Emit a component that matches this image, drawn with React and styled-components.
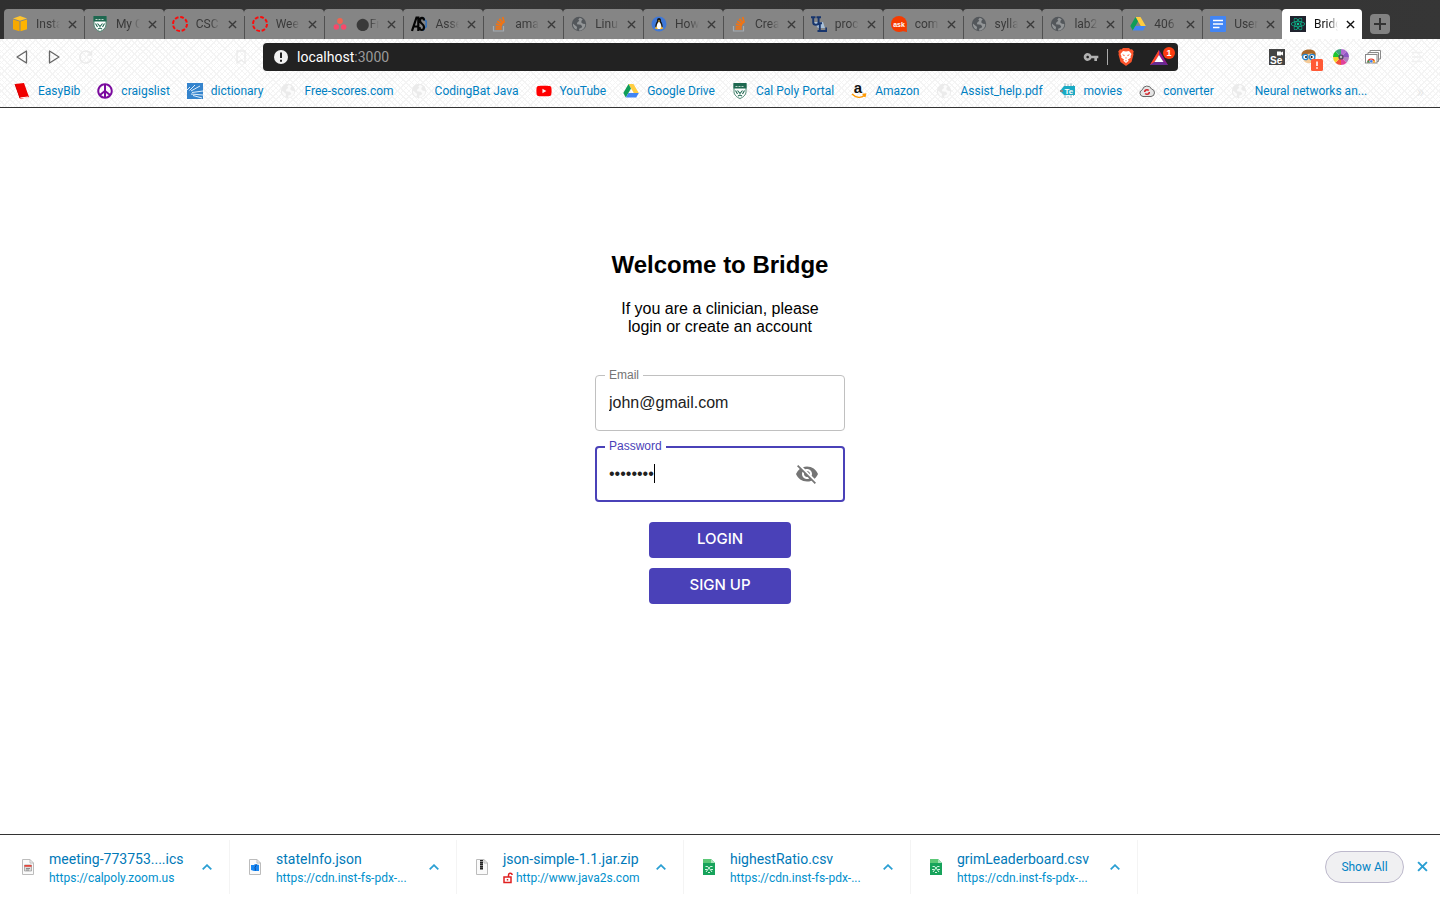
import React, { useState } from "react";
import styled, { createGlobalStyle, css } from "styled-components";
import { FaReact, FaPeace, FaYoutube } from "react-icons/fa";
import { MdVisibilityOff, MdVpnKey } from "react-icons/md";

const Global = createGlobalStyle`
  *, *::before, *::after { box-sizing: border-box; }
  body { margin: 0; background: #fff; font-family: Roboto, sans-serif; }
  button { font: inherit; border: 0; padding: 0; background: none; color: inherit; cursor: pointer; }
`;

const uiFont = css`
  font-family: Roboto, "Noto Sans", sans-serif;
`;

const hatch = css`
  background-color: #fff;
  background-image:
    repeating-linear-gradient(45deg, #f4f4f4 0 1px, transparent 1px 4px),
    repeating-linear-gradient(-45deg, #f4f4f4 0 1px, transparent 1px 4px);
`;

const Window = styled.div`
  min-height: 100vh;
  display: flex;
  flex-direction: column;
`;

/* ---------- tab strip ---------- */
const TabStrip = styled.div`
  ${uiFont}
  display: flex;
  align-items: flex-end;
  height: 39px;
  padding-left: 4px;
  background: linear-gradient(100deg, #303030, #363636 30%, #323232 60%, #363636);
`;

const Tabs = styled.div`
  display: flex;
  flex: 0 1 1358px;
  min-width: 0;
`;

const Tab = styled.div`
  flex: 1 1 0;
  min-width: 0;
  height: 30px;
  display: flex;
  align-items: center;
  gap: 8px;
  padding: 0 7px 0 8px;
  font-size: 12px;
  border-radius: 4px 4px 0 0;
  color: ${(p) => (p.$active ? "#111" : "#3a3a3a")};
  background: ${(p) => (p.$active ? "#fff" : "linear-gradient(#505050, #505050) 0 7px / 1px 100% no-repeat #858585")};
  svg { flex: none; display: block; }
  &:first-child { background: #858585; }
`;

const TabTitle = styled.span`
  flex: 1;
  min-width: 0;
  overflow: hidden;
  white-space: nowrap;
  line-height: 16px;
  mask-image: linear-gradient(90deg, #000 60%, transparent);
`;

const NewTab = styled.button`
  width: 20px;
  height: 20px;
  margin: 0 0 5px 8px;
  display: grid;
  place-items: center;
  border-radius: 4px;
  background: #828282;
`;

/* ---------- toolbar ---------- */
const Chrome = styled.header`
  ${uiFont}
  ${hatch}
  border-bottom: 1px solid #333;
`;

const Toolbar = styled.div`
  display: flex;
  align-items: center;
  height: 36px;
`;

const NavGroup = styled.div`
  flex: 0 0 263px;
  display: flex;
  align-items: center;
  gap: 16px;
  padding: 0 14px;
  svg { display: block; }
  > :last-child { margin-left: auto; }
`;

const AddressBar = styled.div`
  flex: 1;
  min-width: 0;
  height: 28px;
  display: flex;
  align-items: center;
  gap: 8px;
  padding: 0 1px 0 10px;
  border-radius: 4px;
  background: #222;
  color: #9a9a9a;
  font-size: 14px;
  svg { flex: none; display: block; }
  > :last-child { margin-left: 7px; }
`;

const Url = styled.span`
  flex: 1;
  b { font-weight: 400; color: #fff; }
`;

const Divider = styled.span`
  width: 1px;
  height: 16px;
  margin-right: 2px;
  background: #aaa;
`;

const ExtensionGroup = styled.div`
  flex: 0 0 262px;
  display: flex;
  align-items: center;
  justify-content: flex-end;
  gap: 16px;
  padding-right: 15px;
  svg { display: block; overflow: visible; }
  > :last-child { margin-left: 12px; }
`;

const Bookmarks = styled.nav`
  display: flex;
  align-items: center;
  gap: 17px;
  height: 32px;
  padding: 0 16px 0 14px;
`;

const Bookmark = styled.a`
  display: flex;
  align-items: center;
  gap: 8px;
  font-size: 12px;
  line-height: 16px;
  white-space: nowrap;
  color: #007fc2;
  text-decoration: none;
  svg { flex: none; display: block; }
`;

const Overflow = styled.span`
  margin-left: auto;
  color: #e8e8e8;
  font-size: 16px;
`;

/* ---------- sign-in page ---------- */
const Page = styled.main`
  flex: 1;
  display: flex;
  flex-direction: column;
  align-items: center;
  padding-top: 143px;
  font-family: "Liberation Sans", sans-serif;
`;

const Heading = styled.h1`
  margin: 0 0 21px;
  font-size: 24px;
  line-height: 28px;
  color: #000;
`;

const Intro = styled.p`
  width: 220px;
  margin: 0 0 39px;
  text-align: center;
  font-size: 16px;
  line-height: 18px;
  color: #000;
`;

const Form = styled.form`
  width: 250px;
  display: flex;
  flex-direction: column;
  align-items: center;
`;

const Field = styled.div`
  position: relative;
  width: 100%;
  height: 56px;
  display: flex;
  align-items: center;
  margin-bottom: ${(p) => (p.$focused ? 20 : 15)}px;
  padding: 0 ${(p) => (p.$focused ? "24px 0 12px" : "13px")};
  border: ${(p) => (p.$focused ? "2px solid #4a41b8" : "1px solid #c0c0c0")};
  border-radius: 4px;
`;

const FieldLabel = styled.label`
  position: absolute;
  top: ${(p) => (p.$focused ? -9 : -8)}px;
  left: ${(p) => (p.$focused ? 8 : 9)}px;
  padding: 0 4px;
  background: #fff;
  font-size: 12px;
  line-height: 14px;
  color: ${(p) => (p.$focused ? "#4a41b8" : "#757575")};
`;

const Input = styled.input`
  flex: 1;
  min-width: 0;
  border: 0;
  outline: 0;
  padding: 0;
  background: none;
  font-family: inherit;
  font-size: 16px;
  line-height: 20px;
  color: #212121;
  caret-color: transparent;
`;

const Caret = styled.span`
  position: absolute;
  left: 57px;
  top: 16px;
  width: 1px;
  height: 19px;
  background: #000;
`;

const Reveal = styled.button`
  color: #757575;
  svg { display: block; }
`;

const Action = styled.button`
  && {
    width: 142px;
    height: 36px;
    margin-bottom: 10px;
    padding-bottom: 2px;
    border-radius: 4px;
    background: #4a41b8;
    color: #fff;
    font-family: Inter, "Liberation Sans", sans-serif;
    font-size: 15px;
    line-height: 18px;
    font-weight: 500;
  }
`;

/* ---------- downloads ---------- */
const Downloads = styled.footer`
  ${uiFont}
  display: flex;
  align-items: center;
  height: 66px;
  padding: 0 12px 2px 3px;
  border-top: 1px solid #333;
  background: #fff;
  color: #0082c4;
`;

const Download = styled.div`
  flex: 0 1 227px;
  min-width: 0;
  height: 54px;
  display: flex;
  align-items: center;
  padding: 0 17px;
  border-right: 1px solid #f4f4f4;
  svg { flex: none; display: block; }
`;

const FileText = styled.div`
  flex: 1;
  min-width: 0;
  margin-left: 13px;
  padding-top: 4px;
  white-space: nowrap;
`;

const FileName = styled.a`
  display: block;
  font-size: 14px;
  line-height: 19px;
  color: #0079b8;
  text-decoration: none;
`;

const FileSource = styled.span`
  display: flex;
  align-items: center;
  gap: 3px;
  font-size: 12px;
  line-height: 19px;
  color: #0090cc;
`;

const ShowAll = styled.button`
  && {
    margin-left: auto;
    width: 79px;
    height: 32px;
    border: 1px solid #bdb9cc;
    border-radius: 16px;
    background: #f0f0f2;
    font-size: 12px;
  }
`;

const CloseShelf = styled.button`
  margin-left: 13px;
  svg { display: block; stroke: #2a9fd3; }
`;

/* ---------- icons ---------- */
const S = ({ size = 16, children, ...rest }) => (
  <svg width={size} height={size} viewBox="0 0 16 16" fill="none" aria-hidden="true" {...rest}>{children}</svg>
);
const glyph = { fontFamily: "Liberation Sans, sans-serif", fontWeight: 700 };

const Cross = ({ size = 9, width = 2 }) => (
  <svg width={size} height={size} viewBox="0 0 10 10" stroke="currentColor" strokeWidth={width} aria-hidden="true"><path d="M1 1l8 8M9 1l-8 8" /></svg>
);
const Cube = () => (
  <S><path d="M8 0l7 2.500L8 4.800 1 2.500z" fill="#ffc52e" /><path d="M1 3.500l6.500 2v9.800L1 13.200z" fill="#f7a900" /><path d="M15 3.500l-6.500 2v9.800l6.500-2.100z" fill="#ffb400" /></S>
);
const Shield = () => (
  <S>
    <path d="M2 .5h12v8.300c0 3-3 5.700-6 6.700-3-1-6-3.700-6-6.700z" fill="#fff" stroke="#4d8873" />
    <path d="M1.500 0h13v5.500h-13z" fill="#1f6850" />
    <path d="M3.500 3.500h9" stroke="#b9d1c7" strokeDasharray="2 1" />
    <path d="M3.500 7.500l2 3.500M12.500 7.500l-2 3.500M5.500 7.500l2.500 3 2.500-3M6 13l2-1 2 1" stroke="#1f6850" strokeWidth="1.100" />
  </S>
);
const Ring = () => <S><circle cx="8" cy="8" r="7" stroke="#f90d0d" strokeWidth="2" strokeDasharray="3.700 1.800" /></S>;
const Asana = () => (
  <S><circle cx="8" cy="5" r="2.900" fill="#f2634f" /><circle cx="4.300" cy="11" r="2.700" fill="#f7496b" /><circle cx="11.700" cy="11" r="2.700" fill="#f7496b" /></S>
);
const AsLogo = () => (
  <S><path d="M11 2l2 .5 1 2 1.500 1-.5 3 .5 2-2 1.500-1 2h-2" stroke="#3672b9" strokeWidth="1.600" /><path d="M1 15L5.500 1.500h1.800V15M2.500 10.500h5M13 4.500c0-3.500-4-3.500-4 0 0 3.300 4 3.200 4 6.500 0 4-4.500 4-4.500 0" stroke="#050505" strokeWidth="2.200" /></S>
);
const Stack = () => (
  <S><path d="M2.500 10v5h10v-5" stroke="#a5abb1" strokeWidth="1.200" /><path d="M4.500 13h6.200M4.600 10.600l6.100.6M5 8l6 1.600M6.200 5.300l5.300 3.200M8.400 2.700l4 4.900M11.700 1l1.600 5.800" stroke="#f5730f" strokeWidth="1.600" /></S>
);
const Globe = ({ color = "#53575b", land = "#919496" }) => (
  <S>
    <circle cx="8" cy="8" r="7.200" fill={color} />
    <path d="M8.800 1.800l-1.500 1.700 1 1.300-2 1.700-.4 1.700 2 .3 2 .2 1.300 1.800-.9 1.400-1.900.6-.5 1.900 1.600.2c3.200-1 5-3.700 4.800-6.600l-2.300-.2-1.700-1.200.2-1.800 1.200-1.200c-.8-.9-1.700-1.500-2.900-1.800z" fill={land} />
    <path d="M1.900 7.400l2.700 2.400 1.500 1.300-.6 2.600C3.200 12.500 1.700 10.300 1.900 7.400z" fill={land} />
  </S>
);
const Tux = () => (
  <S><circle cx="8" cy="8" r="7.500" fill="#3f78d8" /><path d="M8 2c-1.700 0-2.200 1.500-2 3.300-1 1.700-1.900 3.700-1.500 5.700h7c.4-2-.5-4-1.500-5.700C10.200 3.500 9.700 2 8 2z" fill="#171717" /><path d="M8 5.500c-2 1.500-2.900 4.500-2.200 7.500h4.400C10.900 10 10 7 8 5.500z" fill="#fff" /><path d="M6.900 4.800L8 4.200l1.100.6L8 6zM3.500 12.500l2-2 1.700 3zM12.500 12.500l-2-2-1.700 3z" fill="#f8b522" /></S>
);
const Ul = () => (
  <S>
    <path d="M3 6h9l2 6H7z" fill="#a9c0d8" />
    <path d="M0 1.200h4.500M5.500 1.200H10M2.200 1v5.500c0 3 5.400 3 5.400 0V1M6.500 7.200h4.500M8.800 7v8M6.500 15h8.800v-3.500" stroke="#17356d" strokeWidth="1.900" />
  </S>
);
const Ask = () => (
  <S><path d="M8 8h7.500l.5 8-5-1z" fill="#f53b00" /><circle cx="8" cy="8" r="8" fill="#f53b00" /><text x="8" y="10.500" fontSize="7" textAnchor="middle" {...glyph} fill="#fff">ask</text></S>
);
const Drive = () => (
  <S><path d="M5.500 1h5l5.300 9h-5z" fill="#ffcd40" /><path d="M5.500 1L.3 10l2.500 4.500L8 5.400z" fill="#0f9d58" /><path d="M5.400 10h10.400l-2.600 4.500H2.800z" fill="#4285f4" /></S>
);
const Docs = () => <S><rect width="16" height="16" rx="1" fill="#4285f4" /><path d="M3 4.500h10M3 8h10M3 11.500h6.500" stroke="#fff" strokeWidth="1.700" /></S>;
const ReactFav = () => <S><rect width="16" height="16" fill="#20232e" /><FaReact x="1" y="1" size={14} color="#08c996" /></S>;
const Book = () => <S><path d="M1 1l9-1 5 14-9 2z" fill="#f00000" /><path d="M6 15l8-1" stroke="#fff" /><path d="M1 1l5 14" stroke="#d40000" /></S>;
const Rays = () => (
  <S><rect width="16" height="16" fill="#3584cd" /><path d="M4 11l12 1M5 9.500L16 8M4 8l9-5M2.500 7.500L8 2M0 7l3-3M6 12.500l9 2.500" stroke="#dcecfa" strokeWidth="1" /></S>
);
const AmazonFav = () => (
  <S><text x="7" y="10" fontSize="15" textAnchor="middle" {...glyph} fill="#111">a</text><path d="M1 11c4 4 9 4 12.500 1.500M11.500 11.500l3-.3-.7 2.800" stroke="#ff9900" strokeWidth="1.500" /></S>
);
const Movies = () => (
  <S><path d="M5 0v16M8 1v14M11 0v16M13.500 2v12" stroke="#9ab9c2" strokeDasharray="3 1" /><path d="M0 8l4-5h11v9H4z" fill="#19aac4" /><path d="M0 8h3" stroke="#888" strokeWidth="2" /><text x="4.500" y="10.500" fontSize="8" {...glyph} fill="#fff">Te</text></S>
);
const Cloud = () => (
  <S><path d="M4 13.500a3.500 3.500 0 01-.6-6.800A4.800 4.800 0 0112.500 6a3.800 3.800 0 01-.5 7.500z" fill="#e5e5e5" stroke="#666" /><circle cx="8" cy="9" r="2.300" stroke="#d2232a" strokeWidth="1.500" strokeDasharray="5 1.500" /></S>
);
const Warn = () => <S><circle cx="8" cy="8" r="7" fill="#f2f2f2" /><path d="M8 3.500v5.500M8 10.700v2" stroke="#222" strokeWidth="2" /></S>;
const Brave = () => (
  <svg width="16" height="18" viewBox="0 0 16 18" aria-hidden="true">
    <path d="M5 0h6l1.500 1.500L14 1.300l1.800 2.200-.6 1.500.3 1.500-2 7.500L8 18l-5.500-4-2-7.500L.8 5 .2 3.500 2 1.300l1.500.2z" fill="#fb542b" />
    <path d="M5 3l3 .6L11 3l2.500 3-1 2.200.3 1.300-3 2.200 1 1.100L8 15l-2.800-2.200 1-1.100-3-2.200.3-1.300L2.500 6z" fill="#fff" />
    <path d="M4 6.300l2.700.7-.5 1.300zM12 6.300L9.300 7l.5 1.300zM7.200 9.500h1.600L8 11zM6.800 12.500h2.400L8 13.500z" fill="#fb542b" />
  </svg>
);
const Bat = () => (
  <svg width="28" height="20" viewBox="0 0 28 20" aria-hidden="true">
    <path d="M10 3L1 18h18z" fill="#8b1a8f" /><path d="M10 3L1 18l4.500-3L10 8z" fill="#ff4724" /><path d="M1 18h18l-4.500-3h-9z" fill="#662d91" /><path d="M10 8l-4.500 7h9z" fill="#fff" />
    <circle cx="20" cy="6" r="6" fill="#fb3b10" /><text x="20" y="9" fontSize="9" textAnchor="middle" fill="#fff" {...glyph}>1</text>
  </svg>
);
const Selenium = () => <S><rect width="16" height="16" fill="#444" /><path d="M8 2.500h4v1l2-1v4l-2-1v1H8z" fill="#fff" /><text x="1" y="14.500" fontSize="10" {...glyph} fill="#fff">Se</text></S>;
const Owl = () => (
  <S>
    <path d="M1 6.500C1 2.500 4 1 8 1s6.500 1 6.500 5.500L13 12c-2 3-8 3-10 0z" fill="#f5cb98" />
    <path d="M.5 7C0 3 3 .5 8 .5S15.500 3 14.500 7L11 4.500 6 5z" fill="#a9682a" />
    <circle cx="4.300" cy="8" r="2.700" fill="#fff" stroke="#2585d0" strokeWidth="1.300" /><circle cx="11.200" cy="8" r="2.700" fill="#fff" stroke="#2585d0" strokeWidth="1.300" />
    <circle cx="5" cy="8" r="1" fill="#111" /><circle cx="10.700" cy="8" r="1" fill="#111" />
    <rect x="10" y="10" width="12" height="12" rx="1.500" fill="#ff5a36" /><path d="M16 12.500v4.500M16 18.200v1.500" stroke="#fff" strokeWidth="1.600" />
  </S>
);
const Wheel = () => (
  <S>
    {["#b06bd0", "#8d55c4", "#b07fc0", "#e0409a", "#f3543b", "#f4d429", "#1fc52f", "#3fa57c"].map((c, i) => (
      <path key={c} d="M8 8V0a8 8 0 015.660 2.340z" fill={c} transform={`rotate(${i * 45} 8 8)`} />
    ))}
    <circle cx="8" cy="8" r="2.600" fill="#554a63" /><circle cx="8" cy="8" r="1.200" fill="#bbb" />
  </S>
);
const Cards = () => (
  <S><path d="M5 3V1.500h10.500V10H14" stroke="#8a8a8a" /><path d="M3 5V3.500h10.500v9H12" fill="#f5f5f5" stroke="#8a8a8a" /><rect x=".5" y="5.500" width="11.500" height="8.500" fill="#fff" stroke="#8a8a8a" /><path d="M2.200 13.500a4 4 0 018 0z" fill="#e33b2e" /><path d="M2.200 13.500a4 4 0 011-2.500l2 2.500z" fill="#26a65b" /><path d="M10.200 13.500a4 4 0 00-1-2.500l-2 2.500z" fill="#f9c931" /><circle cx="6.200" cy="12.300" r="1.600" fill="#3a7fe8" stroke="#fff" strokeWidth=".5" /></S>
);
const Sheet = ({ children }) => <S><path d="M2.500.5h7.500l3.500 3.500v11.500h-11z" fill="#fafafa" stroke="#bcbcbc" /><path d="M10 .5V4h3.500" stroke="#bcbcbc" />{children}</S>;
const Ics = () => <Sheet><path d="M4.500 6h7v6h-7z" fill="#ddd" stroke="#888" strokeWidth=".6" /><path d="M4.500 6h7v1.800h-7z" fill="#e4463c" /><path d="M6 9.500h4M6 11h3" stroke="#777" strokeWidth=".8" /></Sheet>;
const Json = () => <Sheet><path d="M4 6h3l1-1 4 1v6H7l-3-1z" fill="#1787f2" /><path d="M9.500 5.500L8 8.500l.5 3" stroke="#124a9c" /></Sheet>;
const Zip = () => <Sheet><path d="M7.500 1v10" stroke="#222" strokeWidth="3" strokeDasharray="1.500 .4" /></Sheet>;
const Csv = () => <S><path d="M2 0h8l4 4v12H2z" fill="#17a35b" /><path d="M10 0v4h4z" fill="#a6e4b9" /><path d="M2 0h8v4H2z" fill="#5cc877" /><path d="M4.500 7.500h2.200l1.300 2 1.300-2h2.200M4 10.500h2.500L8 9.500l1.500 1H12M5 13l1.500-2M11 13l-1.500-2M7 13.500h2" stroke="#eafff2" strokeWidth=".9" /></S>;
const OpenLock = () => <svg width="10" height="12" viewBox="0 0 10 12" fill="none" stroke="#e02020" strokeWidth="1.500" aria-hidden="true"><path d="M1 5h7v5.500H1zM5.500 5V3a1.800 1.800 0 013.600 0M4.500 7v1.500" /></svg>;
const Chevron = () => <svg width="10" height="6" viewBox="0 0 10 6" fill="none" stroke="#2a9fd3" strokeWidth="1.800" aria-hidden="true"><path d="M.7 5.300L5 1.200l4.300 4.100" /></svg>;

const tabs = [
  ["Insta", Cube], ["My C", Shield], ["CSC", Ring], ["Wee", Ring], ["⬤\u200aFr", Asana],
  ["Asse", AsLogo], ["ama", Stack], ["Linu", Globe], ["How", Tux], ["Crea", Stack],
  ["proc", Ul], ["com", Ask], ["sylla", Globe], ["lab2", Globe], ["406", Drive], ["User", Docs], ["Bridg", ReactFav],
];

const PaleGlobe = () => <Globe color="#ebebeb" land="#fbfbfb" />;
const bookmarks = [
  ["EasyBib", Book],
  ["craigslist", () => <FaPeace size={16} color="#7a0a9e" />],
  ["dictionary", Rays],
  ["Free-scores.com", PaleGlobe],
  ["CodingBat Java", PaleGlobe],
  ["YouTube", () => <FaYoutube size={16} color="#f00" />],
  ["Google Drive", Drive],
  ["Cal Poly Portal", Shield],
  ["Amazon", AmazonFav],
  ["Assist_help.pdf", PaleGlobe],
  ["movies", Movies],
  ["converter", Cloud],
  ["Neural networks an...", PaleGlobe],
];

const downloads = [
  { name: "meeting-773753....ics", source: "https://calpoly.zoom.us", Icon: Ics },
  { name: "stateInfo.json", source: "https://cdn.inst-fs-pdx-...", Icon: Json },
  { name: "json-simple-1.1.jar.zip", source: "http://www.java2s.com", Icon: Zip, insecure: true },
  { name: "highestRatio.csv", source: "https://cdn.inst-fs-pdx-...", Icon: Csv },
  { name: "grimLeaderboard.csv", source: "https://cdn.inst-fs-pdx-...", Icon: Csv },
];

export default function App() {
  const [email, setEmail] = useState("john@gmail.com");
  const [password, setPassword] = useState("password");

  return (
    <Window>
      <Global />
      <TabStrip>
        <Tabs>
          {tabs.map(([title, Icon], i) => (
            <Tab key={i} $active={i === tabs.length - 1}>
              <Icon />
              <TabTitle>{title}</TabTitle>
              <button aria-label={`Close ${title}`}><Cross width={1.5} /></button>
            </Tab>
          ))}
        </Tabs>
        <NewTab aria-label="New tab">
          <svg width="12" height="12" viewBox="0 0 12 12" stroke="#333" strokeWidth="2"><path d="M6 0v12M0 6h12" /></svg>
        </NewTab>
      </TabStrip>

      <Chrome>
        <Toolbar>
          <NavGroup>
            <button aria-label="Back"><S><path d="M12.500 2v12L3 8z" stroke="#666" strokeWidth="1.300" strokeLinejoin="round" /></S></button>
            <button aria-label="Forward"><S><path d="M3.500 2v12L13 8z" stroke="#666" strokeWidth="1.300" strokeLinejoin="round" /></S></button>
            <button aria-label="Reload"><S><path d="M13 5a6 6 0 10.500 5M13.500 2v4h-4" stroke="#ebebeb" strokeWidth="1.600" /></S></button>
            <button aria-label="Bookmark this page"><S><path d="M4 2h8v12l-4-3-4 3z" stroke="#ebebeb" strokeWidth="1.300" /></S></button>
          </NavGroup>
          <AddressBar>
            <Warn />
            <Url><b>localhost</b>:3000</Url>
            <MdVpnKey size={16} color="#b0b0b0" />
            <Divider />
            <Brave />
            <Bat />
          </AddressBar>
          <ExtensionGroup>
            <Selenium />
            <Owl />
            <Wheel />
            <Cards />
            <button aria-label="Menu"><S><path d="M3 3.500h10M3 8h10M3 12.500h10" stroke="#f0f0f0" strokeWidth="1.500" /></S></button>
          </ExtensionGroup>
        </Toolbar>
        <Bookmarks>
          {bookmarks.map(([label, Icon]) => (
            <Bookmark key={label} href="#"><Icon />{label}</Bookmark>
          ))}
          <Overflow>»</Overflow>
        </Bookmarks>
      </Chrome>

      <Page>
        <Heading>Welcome to Bridge</Heading>
        <Intro>If you are a clinician, please login or create an account</Intro>
        <Form onSubmit={(e) => e.preventDefault()}>
          <Field>
            <FieldLabel htmlFor="email">Email</FieldLabel>
            <Input id="email" type="email" value={email} onChange={(e) => setEmail(e.target.value)} />
          </Field>
          <Field $focused>
            <FieldLabel htmlFor="password" $focused>Password</FieldLabel>
            <Input id="password" type="password" value={password} onChange={(e) => setPassword(e.target.value)} />
            <Caret />
            <Reveal type="button" aria-label="Show password"><MdVisibilityOff size={24} /></Reveal>
          </Field>
          <Action type="submit">LOGIN</Action>
          <Action type="button">SIGN UP</Action>
        </Form>
      </Page>

      <Downloads>
        {downloads.map(({ name, source, Icon, insecure }) => (
          <Download key={name}>
            <Icon />
            <FileText>
              <FileName href="#">{name}</FileName>
              <FileSource>{insecure && <OpenLock />}{source}</FileSource>
            </FileText>
            <button aria-label={`Options for ${name}`}><Chevron /></button>
          </Download>
        ))}
        <ShowAll>Show All</ShowAll>
        <CloseShelf aria-label="Close downloads"><Cross size={11} width={1.8} /></CloseShelf>
      </Downloads>
    </Window>
  );
}
